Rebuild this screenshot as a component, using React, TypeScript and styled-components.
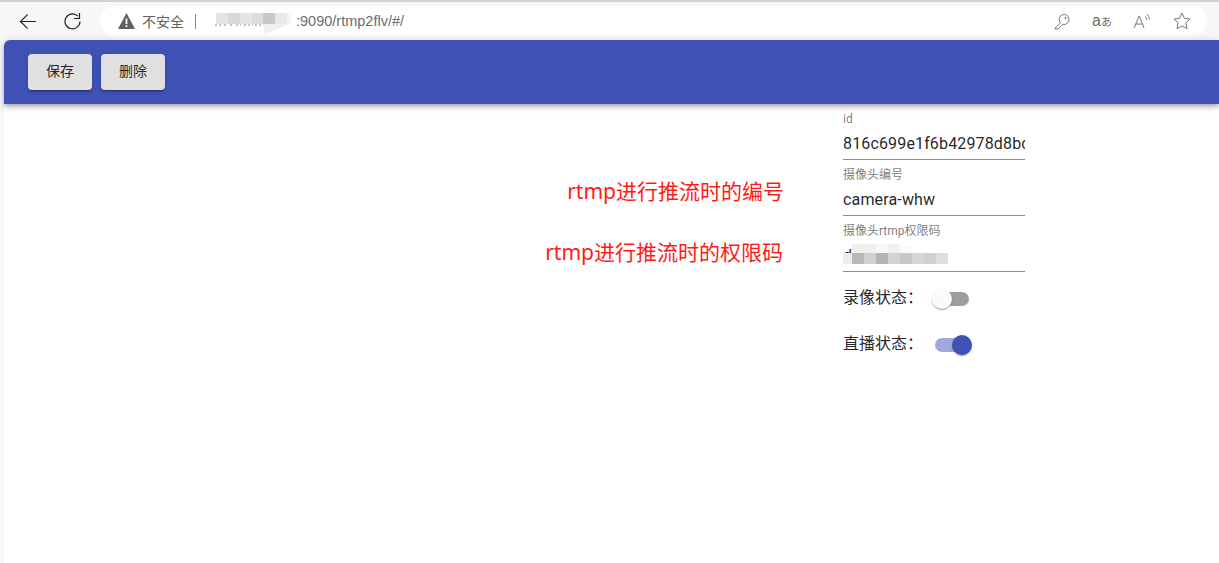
import React from "react";
import styled, { createGlobalStyle } from "styled-components";

const Global = createGlobalStyle`
  html, body { margin: 0; padding: 0; height: 100%; overflow: hidden; background: #f7f7f7; }
  #root { height: 100%; }
  * { box-sizing: border-box; }
`;
const CJK = `Roboto, "Noto Sans CJK SC", sans-serif`;

const Window = styled.div`
  width: 1219px; height: 563px; display: flex; flex-direction: column;
  border-top: 2px solid #d2d2d2; background: #f7f7f7; font-family: ${CJK};
`;
const BrowserBar = styled.div`
  height: 38px; flex: none; display: flex; align-items: center; padding: 0 12px 0 19px;
`;
const NavIcon = styled.svg`
  width: 18px; height: 18px; flex: none; fill: none; stroke: #222; stroke-width: 1.2;
`;
const NavGap = styled.div<{ $w: number }>`width: ${p => p.$w}px; flex: none;`;
const Omnibox = styled.div`
  width: 1107px; height: 30px; flex: none; margin-left: 19px; background: #fff; border-radius: 15px;
  display: flex; align-items: center; padding-left: 18px; padding-right: 15px;
`;
const Warn = styled.svg`width: 17px; height: 16px; flex: none; fill: #5f5f5f;`;
const Insecure = styled.span`
  margin-left: 7px; font-size: 14px; color: #5f5f5f; font-family: "Noto Sans CJK SC", sans-serif; line-height: 16px;
`;
const Divider = styled.span`width: 1px; height: 15px; background: #8a8a8a; margin: 0 12px 0 11px; flex: none;`;
const HostMask = styled.svg`width: 88px; height: 22px; flex: none; margin-top: 6px;`;
const Url = styled.span`font-size: 14.5px; color: #6a6e73; font-family: "Liberation Sans", sans-serif;`;
const OmniIcons = styled.div`margin-left: auto; display: flex; align-items: center; gap: 20px;`;
const OmniIcon = styled.svg`width: 20px; height: 20px; flex: none; fill: none; stroke: #777; stroke-width: 1;`;
const TranslateGlyph = styled.span`
  width: 20px; height: 20px; flex: none; display: flex; align-items: center; justify-content: center;
  font: 16px/20px "Liberation Sans", sans-serif; color: #6c6c6c; white-space: nowrap;
`;
const TranslateKana = styled.span`font: 11px/20px "Noto Sans CJK JP", sans-serif;`;

const Page = styled.div`flex: 1; margin-left: 4px; display: flex; flex-direction: column; background: #fff; border-top-left-radius: 6px;`;
const AppBar = styled.header`
  height: 64px; flex: none; background: #3f51b5; display: flex; align-items: center; gap: 9px;
  padding: 0 24px; border-top-left-radius: 6px;
  box-shadow: 0 2px 4px -1px rgba(0,0,0,.2), 0 4px 5px 0 rgba(0,0,0,.14), 0 1px 10px 0 rgba(0,0,0,.12);
  position: relative; z-index: 1;
`;
const ActionButton = styled.button`
  width: 64px; height: 36px; border: 0; border-radius: 4px; background: #e0e0e0; color: rgba(0,0,0,.87);
  font: 400 14px "Noto Sans CJK SC", sans-serif; padding: 0 0 5px;
  box-shadow: 0 3px 1px -2px rgba(0,0,0,.2), 0 2px 2px 0 rgba(0,0,0,.14), 0 1px 5px 0 rgba(0,0,0,.12);
`;
const Content = styled.main`flex: 1; position: relative; padding: 0 0 0 839px;`;
const Note = styled.div<{ $right: number; $top: number }>`
  position: absolute; font-size: 21px; line-height: 28px; color: #ff1a1a; white-space: nowrap;
  font-family: "Noto Sans", "Noto Sans CJK SC", sans-serif; right: ${p => p.$right}px; top: ${p => p.$top}px;
`;
const Form = styled.div`width: 182px; display: flex; flex-direction: column;`;
const Field = styled.div`
  height: 50px; margin-top: 6px; border-bottom: 1px solid #8c8c8c; display: flex; flex-direction: column; overflow: hidden; position: relative;
`;
const FieldLabel = styled.label`font-size: 12px; line-height: 14px; color: rgba(0,0,0,.54); margin-top: 2px; white-space: nowrap;`;
const FieldValue = styled.div`font-size: 16px; line-height: 19px; color: rgba(0,0,0,.87); margin-top: 8px; white-space: nowrap; letter-spacing: .15px;`;
const Mosaic = styled.svg`position: absolute; left: 0; top: 19px; width: 110px; height: 26px;`;
const SwitchRow = styled.div`display: flex; align-items: center; height: 46px; padding-top: 8px; font-size: 16px; color: rgba(0,0,0,.87); white-space: nowrap;`;
const SwitchLabel = styled.span<{ $w: number }>`width: ${p => p.$w}px; flex: none; margin-top: -6px; font-family: "Noto Sans CJK SC", sans-serif; line-height: 22px;`;
const Track = styled.span<{ $on: boolean }>`
  position: relative; width: 34px; height: 14px; border-radius: 7px; flex: none;
  background: ${p => (p.$on ? "#9fa8da" : "#9e9e9e")};
`;
const Thumb = styled.span<{ $on: boolean }>`
  position: absolute; top: -3px; width: 20px; height: 20px; border-radius: 50%;
  left: ${p => (p.$on ? "17px" : "-3px")};
  background: ${p => (p.$on ? "#3f51b5" : "#fafafa")};
  box-shadow: 0 2px 1px -1px rgba(0,0,0,.2), 0 1px 1px 0 rgba(0,0,0,.14), 0 1px 3px 0 rgba(0,0,0,.12);
`;

const hostCells = [
  [8, 12, "#e4e4e4"], [20, 12, "#d8d8d8"], [32, 12, "#e4e4e4"], [44, 11, "#dcdcdc"],
  [55, 12, "#c8c8c8"], [67, 12, "#e8e8e8"], [79, 4, "#f4f4f4"],
] as const;

const mosaic = [
  [9, 3, "#efefef"], [21, 3, "#f0f0f0"], [33, 3, "#f7f7f7"], [45, 3, "#f0f0f0"], [57, 5, "#fafafa"],
  [0, 12, "#ececec"],
  [9, 12, "#b8b8b8"], [21, 12, "#d0d0d0"], [33, 12, "#b4b4b4"], [45, 12, "#d2d2d2"], [57, 12, "#c8c8c8"],
  [69, 12, "#d6d6d6"], [81, 12, "#d0d0d0"], [93, 12, "#dedede"],
] as const;

export default function App() {
  return (
    <Window>
      <Global />
      <BrowserBar>
        <NavIcon viewBox="0 0 18 18"><path d="M17 9.500H1.500M8.700 2.300 1.500 9.500l7.200 7.200" /></NavIcon>
        <NavGap $w={26} />
        <NavIcon viewBox="0 0 18 18"><path d="M15 4.200A7.500 7.500 0 1 0 17 9.500M16.500 1v5.500H11" /></NavIcon>
        <Omnibox>
          <Warn viewBox="0 0 17 16"><path d="M8.500 0 17 16H0ZM7.600 5.500v5.500h1.800V5.500Zm0 6.700v1.800h1.800v-1.800Z" fillRule="evenodd" /></Warn>
          <Insecure>不安全</Insecure>
          <Divider />
          <HostMask viewBox="0 0 88 22">
            {hostCells.map(([x, w, c]) => (
              <rect key={x} x={x} y="0" width={w} height="11" fill={c} />
            ))}
            <path d="M55 11h27L57 21Z" fill="#efefef" />
            <path d="M7 12h7M16 12h4M22 12h4M28 12h5M36 12h9M47 12h7" stroke="#888" strokeWidth="1" strokeDasharray="2 2" fill="none" />
          </HostMask>
          <Url>:9090/rtmp2flv/#/</Url>
          <OmniIcons>
            <OmniIcon viewBox="0 0 20 20">
              <path d="M8.500 12A5 5 0 1 1 11 13.400L6 18H3v-.8Z" />
              <circle cx="13.500" cy="7" r=".7" />
            </OmniIcon>
            <TranslateGlyph>a<TranslateKana>あ</TranslateKana></TranslateGlyph>
            <OmniIcon viewBox="0 0 20 20">
              <path d="M2.200 17 7 5h.4L12 17M3.800 13h6.800M13 5.500c1.200.8 1.800 2 2 3.500M14.500 3c1.800 1.200 2.800 3 3 5.500" />
            </OmniIcon>
            <OmniIcon viewBox="0 0 20 20">
              <path d="m10 2 2.400 5.300 5.600.7-4.100 3.900 1.100 5.800L10 15l-5 2.700 1.100-5.800L2 8l5.600-.7Z" />
            </OmniIcon>
          </OmniIcons>
        </Omnibox>
      </BrowserBar>
      <Page>
        <AppBar>
          <ActionButton>保存</ActionButton>
          <ActionButton>删除</ActionButton>
        </AppBar>
        <Content>
          <Note $right={435} $top={73}>rtmp进行推流时的编号</Note>
          <Note $right={436} $top={134}>rtmp进行推流时的权限码</Note>
          <Form>
            <Field>
              <FieldLabel>id</FieldLabel>
              <FieldValue>816c699e1f6b42978d8bd0a1</FieldValue>
            </Field>
            <Field>
              <FieldLabel>摄像头编号</FieldLabel>
              <FieldValue>camera-whw</FieldValue>
            </Field>
            <Field>
              <FieldLabel>摄像头rtmp权限码</FieldLabel>
              <FieldValue>d</FieldValue>
              <Mosaic viewBox="0 0 110 26">
                {mosaic.map(([x, y, c]) => (
                  <rect key={`${x}-${y}`} x={x} y={y} width={x === 0 ? 9 : 12} height={y === 12 ? 11 : 12 - y} fill={c} />
                ))}
              </Mosaic>
            </Field>
            <SwitchRow>
              <SwitchLabel $w={92}>录像状态：</SwitchLabel>
              <Track $on={false}><Thumb $on={false} /></Track>
            </SwitchRow>
            <SwitchRow>
              <SwitchLabel $w={92}>直播状态：</SwitchLabel>
              <Track $on><Thumb $on /></Track>
            </SwitchRow>
          </Form>
        </Content>
      </Page>
    </Window>
  );
}
